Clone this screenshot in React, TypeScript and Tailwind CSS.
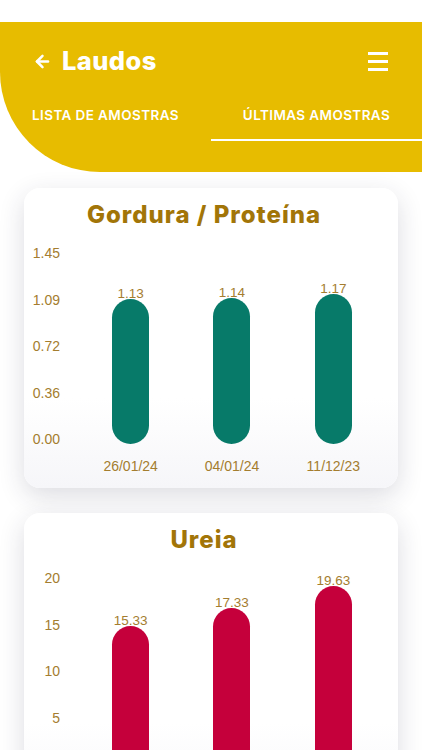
import React from "react";
import { ArrowLeft } from "lucide-react";

type Chart = {
  title: string;
  max: number;
  ticks: string[];
  color: string;
  bars: { label: string; value: number; display: string }[];
};

const charts: Chart[] = [
  {
    title: "Gordura / Proteína",
    max: 1.45,
    ticks: ["1.45", "1.09", "0.72", "0.36", "0.00"],
    color: "bg-[#077a69]",
    bars: [
      { label: "26/01/24", value: 1.13, display: "1.13" },
      { label: "04/01/24", value: 1.14, display: "1.14" },
      { label: "11/12/23", value: 1.17, display: "1.17" },
    ],
  },
  {
    title: "Ureia",
    max: 20,
    ticks: ["20", "15", "10", "5", "0"],
    color: "bg-[#c5003b]",
    bars: [
      { label: "26/01/24", value: 15.33, display: "15.33" },
      { label: "04/01/24", value: 17.33, display: "17.33" },
      { label: "11/12/23", value: 19.63, display: "19.63" },
    ],
  },
];

const ChartCard: React.FC<{ chart: Chart }> = ({ chart }) => {
  return (
    <div className="rounded-[16px] bg-gradient-to-b from-white from-70% to-[#f6f6f9] shadow-[0_8px_26px_rgba(40,40,70,0.16)] pt-[13px] pb-[12px] pr-[14px]">
      <h2 className="text-center text-[24px] leading-[28px] font-extrabold text-[#a27508] font-['Inter',sans-serif] tracking-[1px]">
        {chart.title}
      </h2>
      <div className="mt-[14px] grid grid-cols-[56px_1fr] font-['Liberation_Sans',Arial,sans-serif]">
        <div className="h-[206px] flex flex-col justify-between items-end pr-[20px]">
          {chart.ticks.map((t) => (
            <span key={t} className="text-[14px] leading-[20px] text-[#a47d2f]">
              {t}
            </span>
          ))}
        </div>
        <div className="h-[206px] grid grid-cols-3 pb-[5px]">
          {chart.bars.map((b) => (
            <div key={b.label} className="flex flex-col items-center justify-end">
              <span className="text-[13.5px] leading-[14px] text-[#a47d2f] mb-[-2px] relative z-10">
                {b.display}
              </span>
              <div
                className={`w-[37px] rounded-full ${chart.color}`}
                style={{ height: (b.value / chart.max) * 186 }}
              />
            </div>
          ))}
        </div>
        <div />
        <div className="grid grid-cols-3 mt-[7px]">
          {chart.bars.map((b) => (
            <span key={b.label} className="text-center text-[14px] leading-[20px] text-[#a47d2f]">
              {b.label}
            </span>
          ))}
        </div>
      </div>
    </div>
  );
};

const App: React.FC = () => {
  return (
    <div className="min-h-screen bg-white pt-[22px] overflow-hidden">
      <header className="h-[150px] bg-[#e7bc00] rounded-bl-[100px] text-white font-['Inter',sans-serif]">
        <div className="flex items-center justify-between pl-[33px] pr-[34px] pt-[24px] h-[54px]">
          <div className="flex items-center gap-[10px]">
            <ArrowLeft className="w-[19px] h-[19px]" strokeWidth={3.2} />
            <h1 className="text-[25.5px] leading-[30px] font-extrabold tracking-[0.4px]">Laudos</h1>
          </div>
          <div className="flex flex-col gap-[5px] w-[20px]">
            <span className="h-[3px] bg-white" />
            <span className="h-[3px] bg-white" />
            <span className="h-[3px] bg-white" />
          </div>
        </div>
        <div className="grid grid-cols-2 mt-[24px]">
          <div className="h-[30px] flex items-center justify-center text-[13.5px] font-semibold tracking-[0.4px]">
            LISTA DE AMOSTRAS
          </div>
          <div className="h-[30px] flex items-center justify-center text-[13.5px] font-semibold tracking-[0.4px] border-b-[2.5px] border-white box-content pb-[9px]">
            ÚLTIMAS AMOSTRAS
          </div>
        </div>
      </header>
      <main className="px-6 pt-4 pb-10 flex flex-col gap-[25px]">
        {charts.map((c) => (
          <ChartCard key={c.title} chart={c} />
        ))}
      </main>
    </div>
  );
};

export default App;
